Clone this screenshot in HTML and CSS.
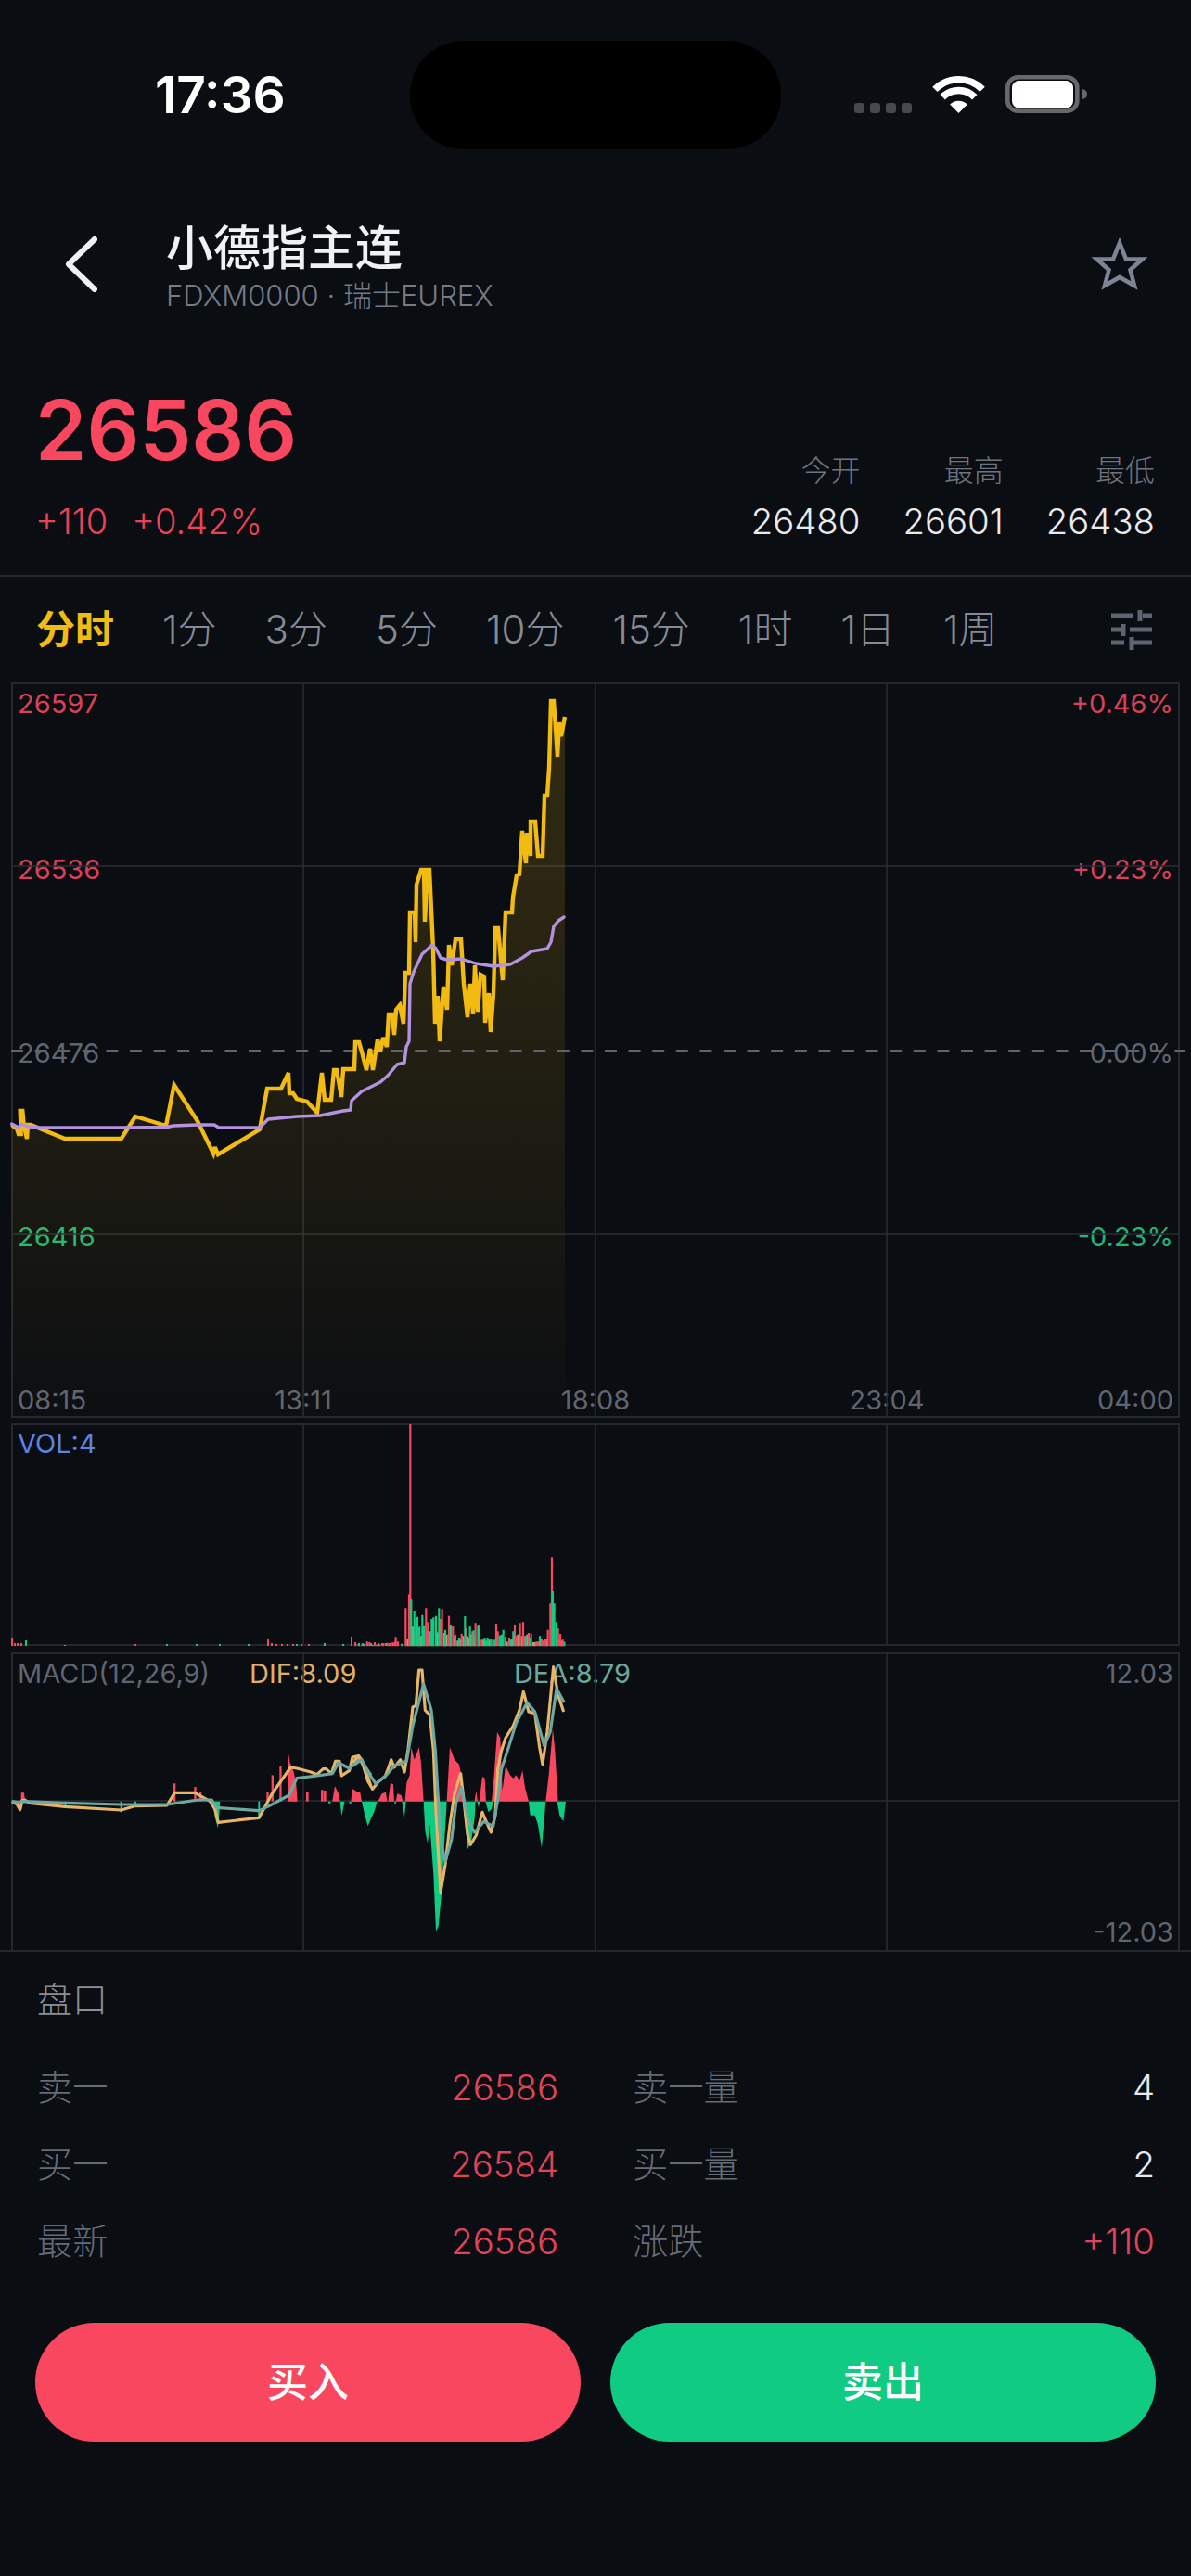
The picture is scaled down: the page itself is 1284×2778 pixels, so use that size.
FILE: index.html
```html
<!DOCTYPE html>
<html lang="zh-CN">
<head>
<meta charset="utf-8">
<title>小德指主连</title>
<link rel="stylesheet" href="styles.css">
</head>
<body>
<div class="screen">
  <header class="status">
    <span class="time">17:36</span>
    <span class="island"></span>
    <svg class="status-icons" width="252" height="41" viewBox="0 0 252 41">
      <g fill="#45484d">
        <rect x="0" y="30" width="11" height="11" rx="3"/>
        <rect x="17" y="30" width="11" height="11" rx="3"/>
        <rect x="34" y="30" width="11" height="11" rx="3"/>
        <rect x="51" y="30" width="11" height="11" rx="3"/>
      </g>
      <g fill="none" stroke="#fff" stroke-width="7.6">
        <path d="M86.9 15.4A36.2 36.2 0 0 1 138.1 15.4"/>
        <path d="M95.2 23.7A24.5 24.5 0 0 1 129.8 23.7"/>
      </g>
      <path fill="#fff" d="M112.5 41L103.1 31.6A13.3 13.3 0 0 1 121.9 31.6Z"/>
      <rect x="165.3" y="2.3" width="75" height="36.4" rx="11" fill="none" stroke="#67686c" stroke-width="4.6"/>
      <rect x="170" y="6" width="66" height="29.5" rx="7.5" fill="#fff"/>
      <path fill="#67686c" d="M246 15Q251 16 251 20.5Q251 25 246 26Z"/>
    </svg>
  </header>

  <nav class="nav">
    <svg class="back" width="36" height="60" viewBox="0 0 36 60">
      <path d="M33 3L5 30L33 57" fill="none" stroke="#eef0f3" stroke-width="6" stroke-linecap="round" stroke-linejoin="round"/>
    </svg>
    <div class="title-block">
      <div class="title">小德指主连</div>
      <div class="subtitle">FDXM0000 · 瑞士EUREX</div>
    </div>
    <svg class="star" width="62" height="58" viewBox="0 0 62 58">
      <path d="M31 6L38 23.5H55.5L42.5 35L47 52L31 43L15 52L19.5 35L6.5 23.5H24Z" fill="none" stroke="#7d8493" stroke-width="4.6" stroke-miterlimit="8"/>
    </svg>
  </nav>

  <section class="quote">
    <div class="quote-main">
      <div class="price">26586</div>
      <div class="change"><span>+110</span><span>+0.42%</span></div>
    </div>
    <div class="stats">
      <span class="stat-label">今开</span><span class="stat-label">最高</span><span class="stat-label">最低</span>
      <span class="stat-value">26480</span><span class="stat-value">26601</span><span class="stat-value">26438</span>
    </div>
  </section>

  <div class="tabs">
    <span class="tab active">分时</span>
    <span class="tab">1分</span>
    <span class="tab">3分</span>
    <span class="tab">5分</span>
    <span class="tab">10分</span>
    <span class="tab">15分</span>
    <span class="tab">1时</span>
    <span class="tab">1日</span>
    <span class="tab">1周</span>
    <svg class="tune" width="44" height="43" viewBox="0 0 44 43">
      <path d="M0 6H24M34 6H44M31 0V12M0 21H10M20 21H44M13 15V28M0 35H14M24 35H44M22 29V43" fill="none" stroke="#5f6570" stroke-width="5"/>
    </svg>
  </div>

  <section class="charts">
    <div class="panel panel-price">
      <span class="tag left red t1">26597</span>
      <span class="tag left red t2">26536</span>
      <span class="tag left gray t3">26476</span>
      <span class="tag left green t4">26416</span>
      <span class="tag right red t1">+0.46%</span>
      <span class="tag right red t2">+0.23%</span>
      <span class="tag right gray t3">0.00%</span>
      <span class="tag right green t4">-0.23%</span>
      <span class="tag left gray t5">08:15</span>
      <span class="tag mid1 gray t5">13:11</span>
      <span class="tag mid2 gray t5">18:08</span>
      <span class="tag mid3 gray t5">23:04</span>
      <span class="tag right gray t5">04:00</span>
      <svg class="plot" width="1256" height="789" viewBox="14 737 1256 789">
        <defs>
          <linearGradient id="area" gradientUnits="userSpaceOnUse" x1="0" y1="760" x2="0" y2="1528">
            <stop offset="0" stop-color="#f2bb12" stop-opacity=".17"/>
            <stop offset=".3" stop-color="#f2bb12" stop-opacity=".14"/>
            <stop offset=".75" stop-color="#f2bb12" stop-opacity=".055"/>
            <stop offset="1" stop-color="#f2bb12" stop-opacity=".01"/>
          </linearGradient>
        </defs>
        <path class="grid" d="M327 735V1528M642 735V1528M956 735V1528M12 933H1272M12 1330H1272"/>
        <polygon fill="url(#area)" points="12.7,1528 12.7,1211.7 15,1214 18,1216 20,1222 22.7,1222 21.7,1197 24.3,1197 25.7,1212 29,1227 30,1212 33,1212 70,1227 130.7,1227 146,1203 179,1213 187.7,1169 213,1208 230,1243 231.7,1236 235,1244 280,1217 288,1173 303,1173 311,1156 312,1178 316,1178 320,1184 331,1187 342,1199 347,1156 350,1185 357,1185 360,1153 363,1153 368,1182 370,1152 382,1152 383,1123 387,1123 390,1133 395,1153 399,1130 402,1153 407,1120 410,1133 413,1118 417,1128 419,1093 423,1093 425,1115 427,1088 431,1083 435,1103 437,1048 441,1048 442,983 447,983 448,1015 449,953 454,937 457,937 458,993 461,937 463,937 467,1023 469,1103 472,1073 474,1122 478,1063 482,1088 484,1018 487,1040 491,1012 497,1012 500,1060 504,1096 507,1060 510,1092 512,1040 515,1090 518,1050 522,1052 523,1102 527,1070 529,1112 532,1070 534,1000 537,1000 542,1056 545,983 552,983 553,967 557,943 560,942 563,895 567,930 568,897 572,922 572,885 577,885 580,922 585,922 587,857 590,857 592,827 594,755 597,755 601,815 603,778 605,793 609,772 609,1528"/>
        <path class="dash" d="M12 1132H1278"/>
        <polyline class="line-price" points="12.7,1211.7 15,1214 18,1216 20,1222 22.7,1222 21.7,1197 24.3,1197 25.7,1212 29,1227 30,1212 33,1212 70,1227 130.7,1227 146,1203 179,1213 187.7,1169 213,1208 230,1243 231.7,1236 235,1244 280,1217 288,1173 303,1173 311,1156 312,1178 316,1178 320,1184 331,1187 342,1199 347,1156 350,1185 357,1185 360,1153 363,1153 368,1182 370,1152 382,1152 383,1123 387,1123 390,1133 395,1153 399,1130 402,1153 407,1120 410,1133 413,1118 417,1128 419,1093 423,1093 425,1115 427,1088 431,1083 435,1103 437,1048 441,1048 442,983 447,983 448,1015 449,953 454,937 457,937 458,993 461,937 463,937 467,1023 469,1103 472,1073 474,1122 478,1063 482,1088 484,1018 487,1040 491,1012 497,1012 500,1060 504,1096 507,1060 510,1092 512,1040 515,1090 518,1050 522,1052 523,1102 527,1070 529,1112 532,1070 534,1000 537,1000 542,1056 545,983 552,983 553,967 557,943 560,942 563,895 567,930 568,897 572,922 572,885 577,885 580,922 585,922 587,857 590,857 592,827 594,755 597,755 601,815 603,778 605,793 609,772"/>
        <polyline class="line-avg" points="12.7,1211 20,1215 23,1211 30,1214 40,1215 70,1215 130,1215 180,1214.5 187,1213 213,1212 231,1212 236,1215 280,1215 289,1206 310,1204 320,1203 345,1202 360,1199 370,1197 378,1196 379,1186 390,1176 400,1171 410,1166 418,1159 428,1147 436,1145 438,1128 441,1122 442,1060 446,1047 455,1028 466,1018 470,1022 475,1032 482,1034 497,1033 513,1038 532,1041 550,1039 563,1032 573,1025 590,1022 594,1015 597,998 602,992 608,988"/>
      </svg>
    </div>

    <div class="panel panel-vol">
      <span class="tag left blue v1">VOL:4</span>
      <svg class="plot" width="1256" height="236" viewBox="14 1536 1256 236">
        <path class="grid" d="M327 1534V1774M642 1534V1774M956 1534V1774"/>
        <path class="vol-red-left" d="M13 1774V1765M16 1774V1771M19 1774V1771M23 1774V1771M146 1774V1772M289 1774V1766M293 1774V1771M298 1774V1772M304 1774V1772M316 1774V1772M325 1774V1772M333 1774V1772M379 1774V1764M383 1774V1770M396 1774V1771M404 1774V1770M412 1774V1771M420 1774V1771M426 1774V1769"/>
        <path class="vol-green-left" d="M28 1774V1768M70 1774V1773M180 1774V1772M212 1774V1772M237 1774V1772M268 1774V1772M310 1774V1772M320 1774V1772M350 1774V1771M370 1774V1772M387 1774V1771M391 1774V1771M400 1774V1771M408 1774V1771M416 1774V1771M424 1774V1771"/>
        <g transform="translate(380 1680) scale(.3333)">
          <path class="vol-tan" d="M178 283V260M195 283V220M212 283V225M222 283V250M240 283V235M297 283V240M305 283V245M315 283V215M340 283V265M358 283V250M372 283V250M384 283V245M412 283V265M455 283V265M500 283V268M535 283V245M565 283V245M585 283V270M643 283V180M676 283V265M275 283V238M330 283V250M348 283V262M376 283V255M396 283V250M423 283V262M442 283V262M516 283V258M548 283V250M590 283V270M628 283V258"/>
          <path class="vol-red" d="M10 283V277M30 283V278M75 283V278M88 283V277M120 283V275M130 283V270M140 283V253M147 283V268M55 283V270M47 283V268M100 283V273M113 283V272M172 283V160M183 283V115M187 283V-435M205 283V195M238 283V160M245 283V205M285 283V195M290 283V163M312 283V185M325 283V217M333 283V245M353 283V242M367 283V225M388 283V235M398 283V208M406 283V215M418 283V262M465 283V210M470 283V235M495 283V252M507 283V255M525 283V213M530 283V250M542 283V208M552 283V205M557 283V250M570 283V240M578 283V242M595 283V268M600 283V268M612 283V260M618 283V265M622 283V258M632 283V230M640 283V145M645 283V-5M665 283V225M668 283V262M672 283V243M680 283V262"/>
          <path class="vol-green" d="M20 283V276M38 283V276M65 283V278M82 283V278M160 283V275M190 283V130M200 283V168M210 283V188M217 283V220M226 283V182M232 283V215M250 283V235M256 283V195M262 283V190M270 283V185M280 283V160M300 283V230M318 283V213M345 283V255M362 283V262M364 283V186M380 283V220M392 283V232M408 283V213M428 283V255M433 283V265M437 283V255M448 283V260M460 283V262M476 283V248M482 283V245M488 283V230M512 283V262M520 283V235M560 283V250M574 283V255M606 283V250M648 283V105M653 283V145M660 283V205M685 283V268"/>
        </g>
      </svg>
    </div>

    <div class="panel panel-macd">
      <span class="tag left gray m1">MACD(12,26,9)</span>
      <span class="tag dif m1">DIF:8.09</span>
      <span class="tag dea m1">DEA:8.79</span>
      <span class="tag right gray m1">12.03</span>
      <span class="tag right gray m2">-12.03</span>
      <svg class="plot" width="1256" height="319" viewBox="14 1783 1256 319">
        <path class="grid" d="M327 1781V2102M642 1781V2102M956 1781V2102M12 1941H1272"/>
        <g transform="translate(0 1880) scale(.3333)">
          <g class="hist-red">
            <polygon points="68,185 68,157 78,157 80,175 85,185"/>
            <polygon points="930,185 933,30 938,60 945,75 950,90 958,130 962,185"/>
            <polygon points="1075,185 1083,135 1095,160 1100,185"/>
            <polygon points="1135,185 1140,145 1150,155 1165,155 1170,185"/>
            <rect x="561" y="127" width="7" height="58"/>
            <rect x="628" y="138" width="7" height="47"/>
            <rect x="645" y="155" width="7" height="30"/>
            <rect x="862" y="153" width="7" height="32"/>
            <rect x="878" y="100" width="7" height="85"/>
            <rect x="904" y="72" width="7" height="113"/>
            <rect x="990" y="155" width="8" height="30"/>
            <rect x="1038" y="148" width="8" height="37"/>
            <rect x="1047" y="150" width="8" height="35"/>
          </g>
          <g class="hist-green">
            <polygon points="690,185 695,235 705,272 712,185"/>
            <polygon points="1100,185 1105,232 1115,185"/>
            <rect x="209" y="185" width="6" height="22"/>
            <rect x="389" y="185" width="6" height="35"/>
            <rect x="435" y="185" width="6" height="8"/>
            <rect x="835" y="185" width="6" height="50"/>
            <rect x="1062" y="185" width="8" height="6"/>
            <rect x="1130" y="185" width="6" height="10"/>
          </g>
          <polyline class="dif-line" points="38,185 55,195 65,212 72,182 80,180 95,190 210,202 392,213 435,200 540,198 565,157 630,157 680,185 695,210 706,253 838,238 880,160 940,75 960,78 1005,90 1025,98 1045,80 1055,80 1072,95 1085,55 1098,55 1105,102 1130,85 1140,42 1160,38 1170,50 1200,135"/>
          <polyline class="dea-line" points="38,185 60,188 75,185 210,190 392,195 540,195 640,180 685,180 700,205 838,215 870,200 935,165 960,110 1025,102 1075,95 1095,60 1130,78 1165,48 1200,100"/>
        </g>
        <g transform="translate(380 1700) scale(.3333)">
          <g class="hist-red">
            <polygon points="0,725 0,685 10,690 20,705 30,725"/>
            <polygon points="82,725 95,700 108,695 112,725"/>
            <polygon points="115,725 123,665 132,670 135,725"/>
            <polygon points="140,725 145,700 158,705 163,725"/>
            <polygon points="170,725 175,665 185,640 190,550 200,590 215,550 222,600 230,725"/>
            <polygon points="305,725 315,550 330,590 345,605 352,640 358,725"/>
            <polygon points="395,725 400,690 405,725"/>
            <polygon points="410,725 420,645 428,650 432,725"/>
            <polygon points="450,725 458,640 468,500 478,520 485,690 495,610 510,640 520,650 530,640 540,660 550,625 558,680 570,725"/>
            <polygon points="625,725 635,640 648,490 655,560 665,725"/>
          </g>
          <g class="hist-green">
            <polygon points="30,725 40,770 50,805 60,780 70,760 80,725"/>
            <polygon points="135,725 138,737 142,725"/>
            <polygon points="160,725 168,775 173,725"/>
            <polygon points="230,725 235,820 243,860 250,800 262,960 270,1145 278,1130 288,1025 295,900 305,725"/>
            <polygon points="358,725 365,800 373,880 385,850 395,780 398,725"/>
            <polygon points="403,725 408,745 412,725"/>
            <polygon points="430,725 440,760 450,750 455,725"/>
            <polygon points="570,725 575,770 590,770 600,800 612,875 618,810 625,725"/>
            <polygon points="662,725 670,770 682,790 690,725"/>
          </g>
          <polyline class="dif-line" points="0,600 20,578 35,610 50,660 65,685 85,660 105,645 115,620 125,590 135,615 155,590 168,630 180,555 195,420 205,415 215,300 225,300 235,430 250,445 262,560 270,760 285,1020 300,930 315,800 330,700 350,635 360,720 372,830 382,865 400,835 420,760 428,780 448,825 462,770 470,620 482,560 495,520 520,480 540,430 553,370 570,435 590,440 605,550 615,605 630,500 650,290 658,340 665,380 683,435"/>
          <polyline class="dea-line" points="0,610 30,590 50,630 75,668 110,640 135,610 175,595 195,480 230,345 255,430 268,560 285,850 300,920 320,850 335,730 352,680 375,790 395,825 425,790 455,805 470,720 482,620 505,550 530,470 565,405 590,435 620,545 640,500 660,360 685,405"/>
        </g>
      </svg>
    </div>
  </section>

  <section class="book">
    <h2 class="book-title">盘口</h2>
    <div class="book-grid">
      <div class="cell"><span class="cell-label">卖一</span><span class="cell-up">26586</span></div>
      <div class="cell"><span class="cell-label">卖一量</span><span class="cell-plain">4</span></div>
      <div class="cell"><span class="cell-label">买一</span><span class="cell-up">26584</span></div>
      <div class="cell"><span class="cell-label">买一量</span><span class="cell-plain">2</span></div>
      <div class="cell"><span class="cell-label">最新</span><span class="cell-up">26586</span></div>
      <div class="cell"><span class="cell-label">涨跌</span><span class="cell-up">+110</span></div>
    </div>
  </section>

  <div class="actions">
    <button class="btn btn-buy">买入</button>
    <button class="btn btn-sell">卖出</button>
  </div>
</div>
</body>
</html>
```
FILE: styles.css
```css
* { box-sizing: border-box; }
html, body { margin: 0; padding: 0; background: #0a0d12; }
body { font-family: Inter, "Noto Sans CJK SC", sans-serif; color: #e8eaed; }
.screen { width: 1284px; height: 2778px; overflow: hidden; background: #0a0d12; }

.status { display: flex; align-items: center; height: 116px; margin-top: 44px; padding-left: 167px; }
.time { width: 275px; font-size: 55px; font-weight: 600; letter-spacing: 0; color: #fff; line-height: 1; }
.island { width: 400px; height: 117px; border-radius: 58px; background: #000; }
.status-icons { margin-left: 79px; margin-top: -1px; display: block; }

.nav { display: flex; align-items: center; height: 90px; margin-top: 80px; padding: 0 46px 0 69px; }
.back { display: block; flex: none; }
.title-block { flex: 1; margin-left: 74px; padding-top: 9px; }
.title { font-size: 51px; font-weight: 500; line-height: 52px; color: #f0f1f3; }
.subtitle { font-size: 31px; line-height: 36px; margin-top: 7px; font-weight: 300; color: #747a86; white-space: nowrap; }
.star { display: block; flex: none; }

.quote { display: flex; justify-content: space-between; align-items: flex-end; padding: 90px 39px 40px 38px; border-bottom: 2px solid #24272d; }
.price { font-size: 89px; line-height: 88px; font-weight: 600; color: #f9475f; }
.change { display: flex; gap: 26px; margin-top: 36px; font-size: 38px; line-height: 36px; font-weight: 300; color: #ea4257; }
.stats { display: grid; grid-template-columns: auto auto auto; column-gap: 46px; row-gap: 18px; justify-items: end; }
.stat-label { font-size: 32px; line-height: 36px; font-weight: 300; color: #6e7480; }
.stat-value { font-size: 38.3px; line-height: 36px; font-weight: 300; color: #e8eaed; }

.tabs { display: flex; align-items: center; gap: 52px; height: 114px; padding: 0 42px 0 39px; }
.tab { font-size: 42px; line-height: 44px; font-weight: 300; color: #858b96; white-space: nowrap; }
.tab.active { font-weight: 600; color: #f2bb12; }
.tune { display: block; margin-left: auto; }

.charts { border-bottom: 2px solid #24272d; padding: 0 12px; }
.panel { position: relative; width: 1260px; border: 2px solid #24272d; }
.panel-price { height: 793px; margin-bottom: 6px; }
.panel-vol { height: 240px; margin-bottom: 7px; }
.panel-macd { height: 321px; border-bottom: 0; }
.plot { display: block; position: relative; z-index: 1; overflow: visible; }

.grid { fill: none; stroke: #2a2d33; stroke-width: 1.5; }
.dash { fill: none; stroke: #5f636b; stroke-width: 2; stroke-dasharray: 13 12.6; }
.line-price { fill: none; stroke: #f2bb12; stroke-width: 4.4; stroke-linejoin: miter; stroke-miterlimit: 3; }
.line-avg { fill: none; stroke: #b392e0; stroke-width: 3.4; stroke-linejoin: round; stroke-linecap: round; }
.vol-red-left { fill: none; stroke: #f9475f; stroke-width: 2; }
.vol-green-left { fill: none; stroke: #10cb82; stroke-width: 2; }
.vol-red { fill: none; stroke: #f9475f; stroke-width: 6.5; }
.vol-green { fill: none; stroke: #10cb82; stroke-width: 6.5; }
.vol-tan { fill: none; stroke: #b69b78; stroke-width: 6.5; }
.hist-red { fill: #f9475f; }
.hist-green { fill: #10cb82; }
.dif-line { fill: none; stroke: #e5b56a; stroke-width: 9.5; stroke-linejoin: round; }
.dea-line { fill: none; stroke: #6fa8a0; stroke-width: 9.5; stroke-linejoin: round; }

.tag { position: absolute; font-size: 29px; line-height: 28px; font-weight: 400; white-space: nowrap; }
.left { left: 5px; }
.right { right: 5px; }
.mid1 { left: 313px; transform: translateX(-50%); }
.mid2 { left: 628px; transform: translateX(-50%); }
.mid3 { left: 942px; transform: translateX(-50%); }
.t1 { top: 7px; }
.t2 { top: 186px; }
.t3 { top: 384px; }
.t4 { top: 582px; }
.t5 { top: 758px; }
.v1 { top: 6px; }
.m1 { top: 7px; }
.m2 { top: 286px; }
.red { color: #d8415a; }
.gray { color: #5f6570; }
.green { color: #1eb877; }
.blue { color: #5a86e0; }
.dif { left: 255px; color: #e0b06a; }
.dea { right: 590px; color: #6aa89c; }

.book { padding: 31px 39px 0 40px; }
.book-title { margin: 0 0 55px; font-size: 38px; line-height: 40px; font-weight: 300; color: #8a8f99; }
.book-grid { display: grid; grid-template-columns: 562px 563px; column-gap: 80px; row-gap: 43px; }
.cell { display: flex; justify-content: space-between; font-size: 38.3px; line-height: 40px; font-weight: 300; }
.cell-label { color: #666c77; }
.cell-up { color: #e0445a; }
.cell-plain { color: #e8eaed; }

.actions { display: flex; gap: 32px; padding: 68px 38px 0; }
.btn { flex: 1; height: 128px; border: 0; border-radius: 64px; font: 500 44px/1 Inter, "Noto Sans CJK SC", sans-serif; color: #fff; }
.btn-buy { background: #f9475f; }
.btn-sell { background: #10cb82; }
```
